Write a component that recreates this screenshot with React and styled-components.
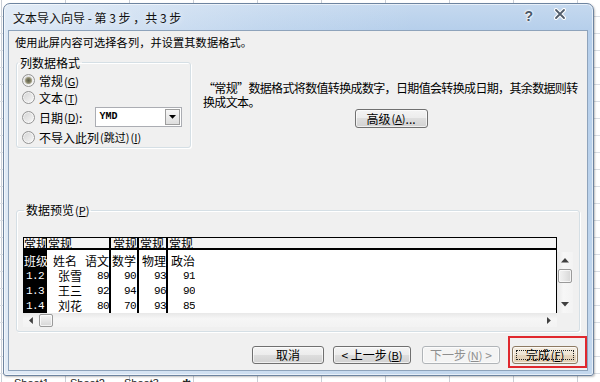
import React from 'react';
import styled, { createGlobalStyle } from 'styled-components';

const CJK = `"Noto Sans CJK SC", "Noto Sans CJK JP", "Liberation Sans", sans-serif`;
const MONO = `"Liberation Mono", "DejaVu Sans Mono", monospace`;

const GlobalStyle = createGlobalStyle`
  html, body { margin: 0; padding: 0; width: 600px; height: 382px; overflow: hidden; background: #fff; }
  body { font-family: ${CJK}; }
  *, *::before, *::after { box-sizing: border-box; }
`;

const Desktop = styled.div`
  width: 600px;
  height: 382px;
  overflow: hidden;
  display: flex;
  flex-direction: column;
  background-color: #fff;
  background-image:
    linear-gradient(to bottom, #dadee4 1px, transparent 1px),
    linear-gradient(to right, #c9ced6 1px, transparent 1px);
  background-size: 100% 17px, 64px 100%;
  background-position: 0 16px, 1px 0;
`;

const Dialog = styled.div`
  margin: 3px 0 0 3px;
  width: 591px;
  height: 373px;
  flex: none;
  border: 1px solid #6d84a0;
  border-radius: 7px 7px 3px 3px;
  padding: 0 5px 4px 4px;
  display: flex;
  flex-direction: column;
  background:
    linear-gradient(to right, rgba(236, 242, 249, 0.75) 0, rgba(236, 242, 249, 0.2) 45%, rgba(236, 242, 249, 0) 70%),
    linear-gradient(to bottom, #c5d9ef 0, #b6cfeb 26px, #bcd3ec 60%, #c4d8ee 100%);
  box-shadow: inset 0 0 0 1px rgba(255, 255, 255, 0.6), 1px 1px 2px rgba(0, 0, 0, 0.25);
`;

const TitleBar = styled.div`
  height: 26px;
  flex: none;
  display: flex;
  align-items: center;
  padding-left: 5px;
`;

const Title = styled.div`
  flex: 1;
  font-family: ${CJK};
  font-size: 12px;
  color: #111;
  white-space: pre;
  text-shadow: 0 0 6px rgba(255, 255, 255, 0.9);
  padding-top: 1px;
`;

const HelpGlyph = styled.span`
  font: bold 14px "Liberation Sans", sans-serif;
  color: #4b5868;
  margin-right: 21px;
  margin-top: -3px;
  text-shadow: 0 0 2px #fff, 0 0 2px #fff, 0 0 3px #fff;
`;

const CloseGlyph = styled.svg`
  width: 12px;
  height: 12px;
  margin-right: 22px;
  margin-top: -6px;
`;

const Client = styled.div`
  flex: 1;
  background: #f0f0f0;
  border: 1px solid #8ea3bb;
  display: flex;
  flex-direction: column;
  padding: 4px 0 0 7px;
  font-family: ${CJK};
  font-size: 12px;
  color: #000;
`;

const Intro = styled.div`
  height: 15px;
  line-height: 15px;
  margin-left: -1px;
  font-size: 11.2px;
  letter-spacing: 0.1px;
  white-space: nowrap;
`;

const TopRow = styled.div`
  display: flex;
  align-items: flex-start;
  margin-top: 5px;
`;

const GroupBox = styled.fieldset`
  margin: 0;
  min-width: 0;
  width: ${p => p.$w}px;
  padding: ${p => p.$pad};
  border: 1px solid #d5dfe5;
  border-radius: 3px;
  box-shadow: inset 1px 1px 0 #fff, 1px 1px 0 #fff;
`;

const Legend = styled.legend`
  padding: 0 2px;
  margin-left: 1px;
  font-size: 12px;
  line-height: 15px;
  white-space: nowrap;
`;

const RadioRow = styled.div`
  display: flex;
  align-items: center;
  height: ${p => p.$h || 17}px;
  margin-top: ${p => p.$mt || 0}px;
  padding-left: 5px;
  white-space: nowrap;
`;

const RadioCircle = styled.span`
  width: 13px;
  height: 13px;
  flex: none;
  border-radius: 50%;
  border: 1px solid #949494;
  margin-right: 4px;
  background: ${p => p.$checked
    ? 'radial-gradient(circle, #5f604c 0, #7d7b62 2px, #a9a68c 3.2px, rgba(0,0,0,0) 4px), linear-gradient(135deg, #d0d0d0, #f8f8f8)'
    : 'linear-gradient(135deg, #d2d2d2, #f9f9f9)'};
  box-shadow: inset 0 0 0 1px rgba(255, 255, 255, 0.6);
`;

const Key = styled.span`
  font-size: 11px;
  margin-left: 1px;
  u { text-decoration: underline; text-underline-offset: 1px; }
`;

const Combo = styled.div`
  display: flex;
  width: 87px;
  height: 20px;
  margin-left: ${p => p.$ml}px;
  border: 1px solid #abadb3;
  background: #fff;
`;

const ComboText = styled.span`
  flex: 1;
  padding-left: 3px;
  font: bold 10px ${MONO};
  line-height: 18px;
`;

const ComboButton = styled.span`
  width: 15px;
  flex: none;
  margin: 1px;
  border: 1px solid #9d9d9d;
  display: flex;
  align-items: center;
  justify-content: center;
  background: linear-gradient(to bottom, #f7f7f7, #dedede);
`;

const Side = styled.div`
  margin-left: 12px;
  margin-top: 26px;
  width: 378px;
  display: flex;
  flex-direction: column;
`;

const DescLine = styled.div`
  line-height: 14px;
  height: 14px;
  white-space: nowrap;
  font-size: 12px;
  letter-spacing: -0.65px;
`;

const Button = styled.button`
  flex: none;
  width: ${p => p.$w}px;
  height: ${p => p.$h || 18}px;
  margin: ${p => p.$m || 0};
  padding: 0;
  border: 1px solid ${p => (p.disabled ? '#b0b4b8' : p.$default ? '#8d7a62' : '#707070')};
  border-radius: 3px;
  background: ${p => p.disabled
    ? '#f4f4f4'
    : p.$default
      ? 'linear-gradient(to bottom, #f6efe4 0%, #efe4d3 50%, #e6d6bf 50%, #e2d0b6 100%)'
      : 'linear-gradient(to bottom, #f4f4f4 0%, #ececec 50%, #dedede 50%, #d2d2d2 100%)'};
  box-shadow: inset 0 0 0 1px rgba(255, 255, 255, 0.65);
  color: ${p => (p.disabled ? '#8e8e8e' : '#000')};
  font-family: ${CJK};
  font-size: 12px;
  line-height: 1;
  display: flex;
  align-items: center;
  justify-content: center;
  white-space: nowrap;
`;

const FocusRect = styled.span`
  display: flex;
  align-items: center;
  justify-content: center;
  width: calc(100% - 6px);
  height: calc(100% - 6px);
  border: 1px dotted #222;
`;

const AdvancedButton = styled(Button)`
  align-self: center;
  margin-left: -2px;
`;

const PreviewBox = styled(GroupBox)`
  margin-top: 54px;
`;

const PreviewArea = styled.div`
  display: flex;
  align-items: flex-start;
`;

const PreviewMain = styled.div`
  width: 534px;
  display: flex;
  flex-direction: column;
`;

const Table = styled.div`
  display: flex;
  height: 76px;
  border: 1px solid #000;
  border-bottom: none;
  background: #fff;
  overflow: hidden;
`;

const Col = styled.div`
  display: flex;
  flex-direction: column;
  width: ${p => (p.$w ? `${p.$w}px` : 'auto')};
  flex: ${p => (p.$grow ? 1 : 'none')};
  background: ${p => (p.$dark ? '#000' : '#fff')};
  border-right: ${p => (p.$sep ? '2px solid #000' : 'none')};
`;

const HeadCell = styled.div`
  height: 14px;
  line-height: 12px;
  font-size: 12px;
  padding-left: ${p => p.$pl || 0}px;
  background: #f4f4f4;
  border-bottom: 2px solid #000;
  border-right: ${p => (p.$edge ? '1px solid #000' : 'none')};
  white-space: nowrap;
  overflow: hidden;
  color: #000;
`;

const Body = styled.div`
  padding-top: 3px;
`;

const Cell = styled.div`
  height: 15px;
  width: ${p => (p.$w ? `${p.$w}px` : 'auto')};
  display: flex;
  align-items: center;
  justify-content: ${p => (p.$right ? 'flex-end' : p.$split ? 'space-between' : 'flex-start')};
  padding: 0 ${p => p.$pr || 0}px 0 ${p => p.$pl || 0}px;
  color: ${p => (p.$dark ? '#fff' : '#000')};
  font-size: 12px;
  white-space: nowrap;
  overflow: hidden;
`;

const Name = styled.span`
  padding-left: ${p => p.$indent}px;
`;

const Num = styled.span`
  font-family: ${MONO};
  font-size: 11px;
  letter-spacing: -0.6px;
`;

const HScroll = styled.div`
  height: 14px;
  display: flex;
  align-items: center;
  background: linear-gradient(to bottom, #e8e8e8, #f6f6f6 40%, #f3f3f3);
`;

const VScroll = styled.div`
  width: 16px;
  height: 61px;
  margin-top: 15px;
  display: flex;
  flex-direction: column;
  align-items: center;
  background: linear-gradient(to right, #e8e8e8, #f7f7f7 40%, #f3f3f3);
`;

const ArrowBox = styled.div`
  display: flex;
  align-items: center;
  justify-content: center;
  width: ${p => p.$w}px;
  height: ${p => p.$h}px;
  flex: none;
`;

const Thumb = styled.div`
  width: ${p => p.$w}px;
  height: ${p => p.$h}px;
  flex: none;
  margin: ${p => p.$m || 0};
  border: 1px solid #9a9a9a;
  border-radius: 2px;
  background: ${p => p.$vertical
    ? 'linear-gradient(to right, #f3f3f3, #e6e6e6 50%, #d6d6d6)'
    : 'linear-gradient(to bottom, #f3f3f3, #e6e6e6 50%, #d6d6d6)'};
  box-shadow: inset 0 0 0 1px rgba(255, 255, 255, 0.7);
`;

const Spacer = styled.div`
  flex: 1;
`;

const ButtonRow = styled.div`
  display: flex;
  justify-content: flex-end;
  align-items: flex-start;
  margin-top: 4px;
`;

const Highlight = styled.div`
  border: 2px solid #e0282e;
  padding: 8px 7px 2px 2px;
  margin-left: 8px;
`;

const SheetTabs = styled.div`
  display: flex;
  align-items: flex-start;
  height: 6px;
  overflow: hidden;
  padding-left: 14px;
  font: 11px "Liberation Sans", sans-serif;
  line-height: 11px;
  color: #222;
`;

const SheetTab = styled.span`
  width: ${p => p.$w}px;
  flex: none;
  margin-top: 2px;
`;

const Triangle = ({ dir, size = 7, color = '#000' }) => {
  const pts = {
    down: `0,0 ${size},0 ${size / 2},${size * 0.55}`,
    up: `0,${size * 0.55} ${size},${size * 0.55} ${size / 2},0`,
    left: `${size * 0.55},0 ${size * 0.55},${size} 0,${size / 2}`,
    right: `0,0 0,${size} ${size * 0.55},${size / 2}`,
  }[dir];
  const w = dir === 'left' || dir === 'right' ? size * 0.55 : size;
  const h = dir === 'left' || dir === 'right' ? size : size * 0.55;
  return (
    <svg width={w} height={h} viewBox={`0 0 ${w} ${h}`}>
      <polygon points={pts} fill={color} />
    </svg>
  );
};

const K = ({ label, k }) => (
  <>
    {label}
    <Key>(<u>{k}</u>)</Key>
  </>
);

const rows = [
  { c1: '班级', name: '姓名', ind: 6, v2: '语文', v3: '数学', v4: '物理', v5: '政治' },
  { c1: '1.2', name: '张雪', ind: 11, v2: '89', v3: '90', v4: '93', v5: '91' },
  { c1: '1.3', name: '王三', ind: 11, v2: '92', v3: '94', v4: '96', v5: '90' },
  { c1: '1.4', name: '刘花', ind: 11, v2: '80', v3: '70', v4: '93', v5: '85' },
];

const T = ({ v }) => (/^[\d.]+$/.test(v) ? <Num>{v}</Num> : <span>{v}</span>);

export default function App() {
  return (
    <>
      <GlobalStyle />
      <Desktop>
        <Dialog>
          <TitleBar>
            <Title>文本导入向导 - 第 3 步 ，共 3 步</Title>
            <HelpGlyph>?</HelpGlyph>
            <CloseGlyph viewBox="0 0 12 12">
              <path d="M2 2 L10 10 M10 2 L2 10" stroke="#fff" strokeWidth="4" strokeLinecap="round" />
              <path d="M2 2 L10 10 M10 2 L2 10" stroke="#505c6b" strokeWidth="1.8" strokeLinecap="round" />
            </CloseGlyph>
          </TitleBar>
          <Client>
            <Intro>使用此屏内容可选择各列，并设置其数据格式。</Intro>
            <TopRow>
              <GroupBox $w={175} $pad="2px 0 0 0">
                <Legend>列数据格式</Legend>
                <RadioRow>
                  <RadioCircle $checked />
                  <K label="常规" k="G" />
                </RadioRow>
                <RadioRow>
                  <RadioCircle />
                  <K label="文本" k="T" />
                </RadioRow>
                <RadioRow $h={20} $mt={1}>
                  <RadioCircle />
                  <K label="日期" k="D" />:
                  <Combo $ml={13}>
                    <ComboText>YMD</ComboText>
                    <ComboButton>
                      <Triangle dir="down" size={7} />
                    </ComboButton>
                  </Combo>
                </RadioRow>
                <RadioRow $h={20}>
                  <RadioCircle />
                  不导入此列<Key>(跳过)</Key>
                  <Key>(<u>I</u>)</Key>
                </RadioRow>
              </GroupBox>
              <Side>
                <DescLine>“常规”数据格式将数值转换成数字，日期值会转换成日期，其余数据则转</DescLine>
                <DescLine>换成文本。</DescLine>
                <AdvancedButton $w={73} $h={19}>
                  <K label="高级" k="A" />...
                </AdvancedButton>
              </Side>
            </TopRow>
            <PreviewBox $w={564} $pad="19px 0 4px 6px">
              <Legend>
                <K label="数据预览" k="P" />
              </Legend>
              <PreviewArea>
                <PreviewMain>
                  <Table>
                    <Col $w={23} $dark>
                      <HeadCell $edge>常规</HeadCell>
                      <Body>
                        {rows.map((r, i) => (
                          <Cell key={i} $dark $pl={/\d/.test(r.c1) ? 2 : 0}>
                            <T v={r.c1} />
                          </Cell>
                        ))}
                      </Body>
                    </Col>
                    <Col $w={64} $sep>
                      <HeadCell $pl={1}>常规</HeadCell>
                      <Body>
                        {rows.map((r, i) => (
                          <Cell key={i} $split>
                            <Name $indent={r.ind}>{r.name}</Name>
                            <T v={r.v2} />
                          </Cell>
                        ))}
                      </Body>
                    </Col>
                    <Col $w={28} $sep>
                      <HeadCell $pl={2}>常规</HeadCell>
                      <Body>
                        {rows.map((r, i) => (
                          <Cell key={i} $right $pr={1}>
                            <T v={r.v3} />
                          </Cell>
                        ))}
                      </Body>
                    </Col>
                    <Col $w={29} $sep>
                      <HeadCell $pl={1}>常规</HeadCell>
                      <Body>
                        {rows.map((r, i) => (
                          <Cell key={i} $right>
                            <T v={r.v4} />
                          </Cell>
                        ))}
                      </Body>
                    </Col>
                    <Col $grow>
                      <HeadCell $pl={1}>常规</HeadCell>
                      <Body>
                        {rows.map((r, i) => (
                          <Cell key={i} $right $w={27}>
                            <T v={r.v5} />
                          </Cell>
                        ))}
                      </Body>
                    </Col>
                  </Table>
                  <HScroll>
                    <ArrowBox $w={16} $h={14}>
                      <Triangle dir="left" size={7} color="#404040" />
                    </ArrowBox>
                    <Thumb $w={14} $h={13} />
                    <Spacer />
                    <ArrowBox $w={16} $h={14}>
                      <Triangle dir="right" size={7} color="#404040" />
                    </ArrowBox>
                  </HScroll>
                </PreviewMain>
                <VScroll>
                  <ArrowBox $w={16} $h={17}>
                    <Triangle dir="up" size={8} color="#404040" />
                  </ArrowBox>
                  <Thumb $w={14} $h={14} $vertical />
                  <Spacer />
                  <ArrowBox $w={16} $h={17}>
                    <Triangle dir="down" size={8} color="#404040" />
                  </ArrowBox>
                </VScroll>
              </PreviewArea>
            </PreviewBox>
            <ButtonRow>
              <Button $w={72} $m="10px 0 0 0">取消</Button>
              <Button $w={78} $m="10px 0 0 9px">
                &lt; 上一步<Key>(<u>B</u>)</Key>
              </Button>
              <Button $w={78} $m="10px 0 0 11px" disabled>
                下一步<Key>(<u>N</u>)</Key>&nbsp;&gt;
              </Button>
              <Highlight>
                <Button $w={66} $default>
                  <FocusRect>
                    完成<Key>(<u>F</u>)</Key>
                  </FocusRect>
                </Button>
              </Highlight>
            </ButtonRow>
          </Client>
        </Dialog>
        <SheetTabs>
          <SheetTab $w={56}>Sheet1</SheetTab>
          <SheetTab $w={54}>Sheet2</SheetTab>
          <SheetTab $w={58}>Sheet3</SheetTab>
          <SheetTab $w={20}>✱</SheetTab>
        </SheetTabs>
      </Desktop>
    </>
  );
}
